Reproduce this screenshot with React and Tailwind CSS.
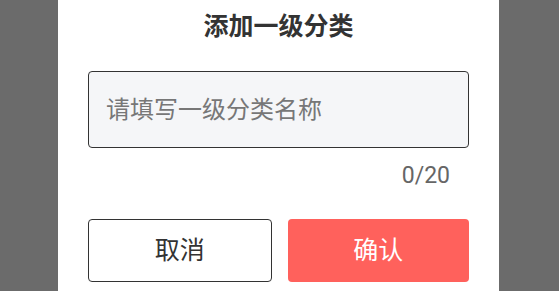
export default function App() {
  return (
    <div
      className="flex h-[291px] w-full overflow-hidden bg-[#6b6b6b]"
      style={{ fontFamily: 'Roboto, "Noto Sans CJK SC", sans-serif' }}
    >
      <div className="ml-[58px] flex h-full w-[441px] flex-col bg-white px-[30px] pt-[11px]">
        <h2 className="text-center text-[25px] font-bold leading-[32px] text-[#333]">添加一级分类</h2>
        <div className="mt-[28px] flex h-[77px] items-center rounded-[4px] border-[1.5px] border-[#333] bg-[#f5f6f8] px-[17px]">
          <span className="text-[24px] leading-[30px] text-[#777]">请填写一级分类名称</span>
        </div>
        <div className="mt-[14px] pr-[19px] text-right text-[23px] leading-[28px] text-[#666]">0/20</div>
        <div className="mt-[29px] flex gap-[16px]">
          <button className="flex h-[63px] flex-1 items-center justify-center rounded-[4px] border-[1.5px] border-[#333] bg-white text-[25px] text-[#333]">
            取消
          </button>
          <button className="flex h-[63px] flex-1 items-center justify-center rounded-[4px] bg-[#ff615c] text-[25px] text-white">
            确认
          </button>
        </div>
      </div>
    </div>
  );
}
